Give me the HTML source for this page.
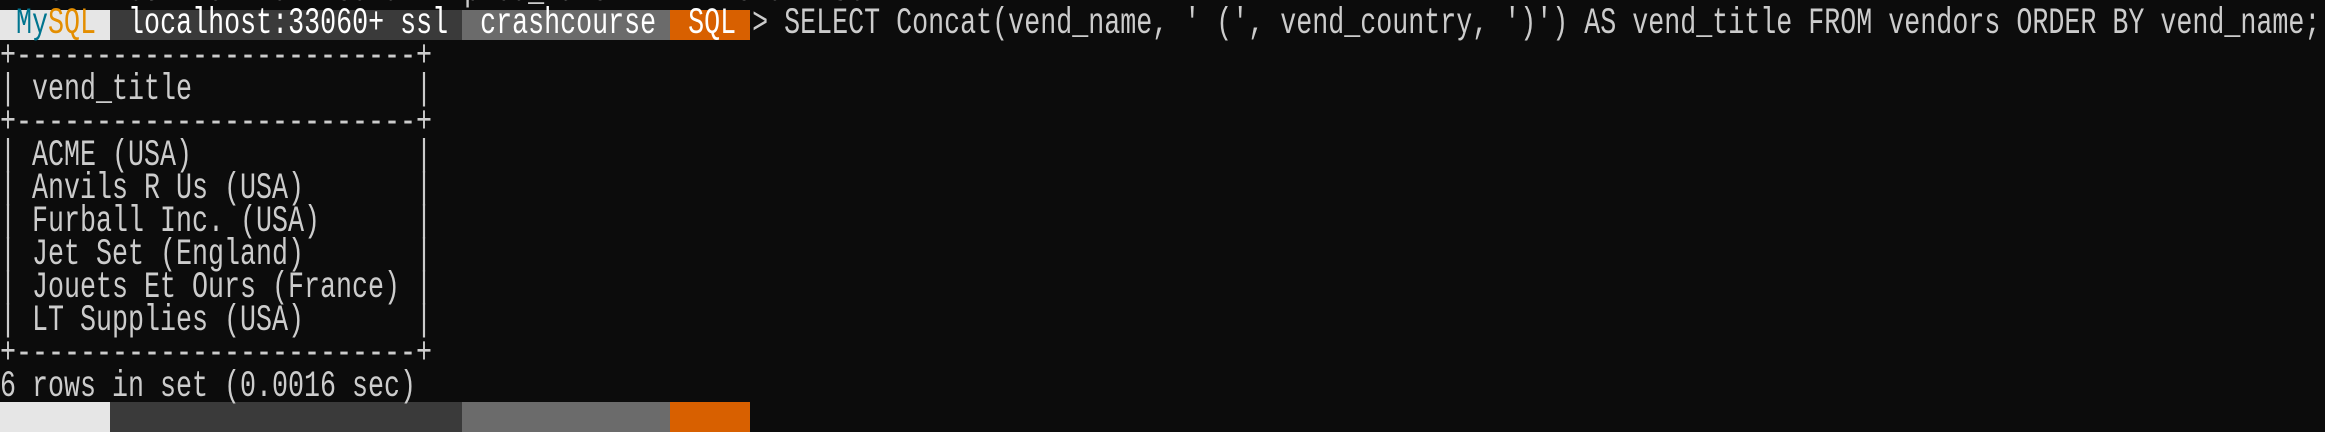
<!DOCTYPE html>
<html><head><meta charset="utf-8"><style>
html,body{margin:0;padding:0;background:#0c0c0c;width:2325px;height:408px;overflow:hidden}
.l{position:absolute;left:0;height:33px;line-height:33px;white-space:pre;font-family:"Liberation Mono",monospace;font-size:37px;color:#cccccc;transform:scaleX(0.7207);transform-origin:0 50%}
.seg{position:absolute;height:30px}
</style></head><body>
<div class="seg" style="left:0;top:10px;width:110px;background:#e6e6e6"></div>
<div class="seg" style="left:110px;top:10px;width:352px;background:#3a3a3a"></div>
<div class="seg" style="left:462px;top:10px;width:208px;background:#6b6b6b"></div>
<div class="seg" style="left:670px;top:10px;width:80px;background:#d86000"></div>
<div class="seg" style="left:0;top:402px;width:110px;background:#e6e6e6"></div>
<div class="seg" style="left:110px;top:402px;width:352px;background:#3a3a3a"></div>
<div class="seg" style="left:462px;top:402px;width:208px;background:#6b6b6b"></div>
<div class="seg" style="left:670px;top:402px;width:80px;background:#d86000"></div>
<div class="l" style="top:-25px">ERROR: 1054: Unknown column 'prod_name' in 'field list'</div>
<div class="l" style="top:8px"> <span style="color:#00758f">My</span><span style="color:#e48e00">SQL</span>  <span style="color:#fff">localhost:33060+ ssl  crashcourse  SQL </span><span style="color:#ccc">&gt; SELECT Concat(vend_name, ' (', vend_country, ')') AS vend_title FROM vendors ORDER BY vend_name;</span></div>
<div class="l" style="top:41px">+-------------------------+</div>
<div class="l" style="top:74px">| vend_title              |</div>
<div class="l" style="top:107px">+-------------------------+</div>
<div class="l" style="top:140px">| ACME (USA)              |</div>
<div class="l" style="top:173px">| Anvils R Us (USA)       |</div>
<div class="l" style="top:206px">| Furball Inc. (USA)      |</div>
<div class="l" style="top:239px">| Jet Set (England)       |</div>
<div class="l" style="top:272px">| Jouets Et Ours (France) |</div>
<div class="l" style="top:305px">| LT Supplies (USA)       |</div>
<div class="l" style="top:338px">+-------------------------+</div>
<div class="l" style="top:371px">6 rows in set (0.0016 sec)</div>
</body></html>
